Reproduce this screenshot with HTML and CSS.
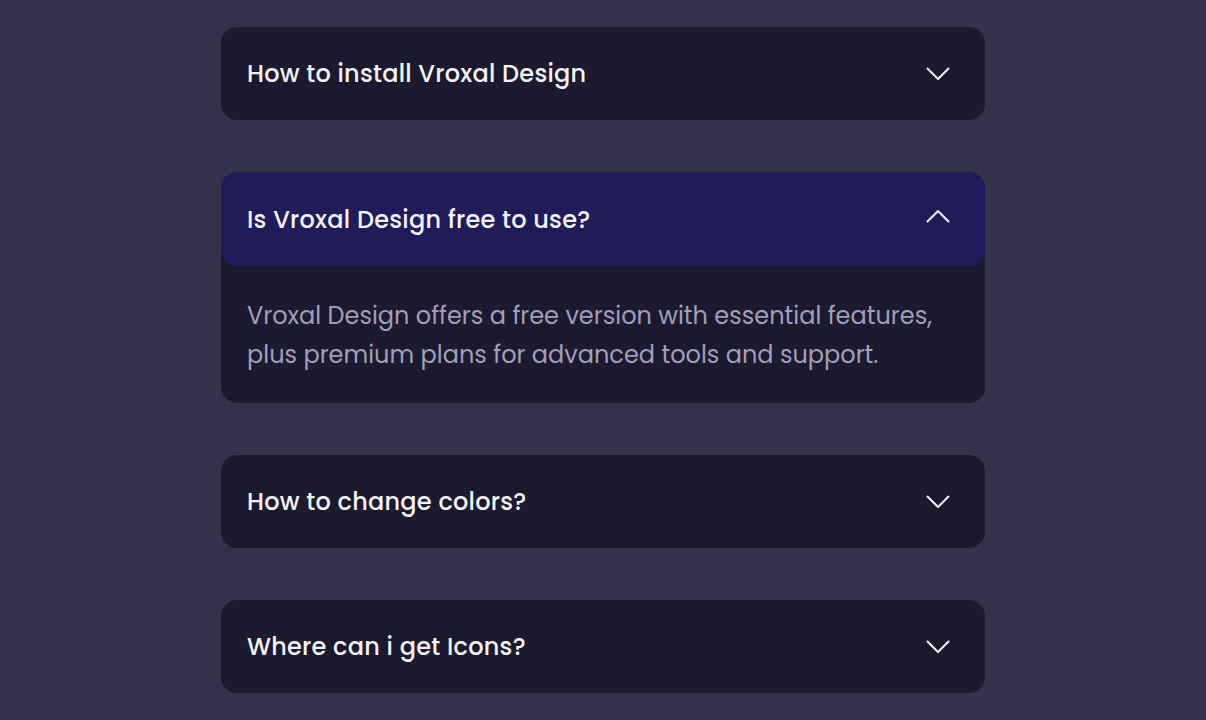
FILE: index.html
```html
<!DOCTYPE html>
<html lang="en">

<head>
    <meta charset="UTF-8">
    <meta name="viewport" content="width=device-width, initial-scale=1.0">
    <title>FAQ</title>
    <link rel="stylesheet" href="styles.css">
</head>

<body>
    <div class="faq">
        <div class="faq-item">
            <div class="faq-header">
                <span>How to install Vroxal Design</span>
                <svg class="chevron" viewBox="0 0 24 14"><path d="M1.5 1.5L12 12 22.5 1.5" /></svg>
            </div>
        </div>

        <div class="faq-item open">
            <div class="faq-header">
                <span>Is Vroxal Design free to use?</span>
                <svg class="chevron" viewBox="0 0 24 14"><path d="M1.5 12.5L12 2 22.5 12.5" /></svg>
            </div>
            <div class="faq-body">
                Vroxal Design offers a free version with essential features,
                plus premium plans for advanced tools and support.
            </div>
        </div>

        <div class="faq-item">
            <div class="faq-header">
                <span>How to change colors?</span>
                <svg class="chevron" viewBox="0 0 24 14"><path d="M1.5 1.5L12 12 22.5 1.5" /></svg>
            </div>
        </div>

        <div class="faq-item">
            <div class="faq-header">
                <span>Where can i get Icons?</span>
                <svg class="chevron" viewBox="0 0 24 14"><path d="M1.5 1.5L12 12 22.5 1.5" /></svg>
            </div>
        </div>
    </div>
</body>

</html>
```

FILE: styles.css
```css
body {
    background-color: #34314a;
    font-family: 'Poppins', 'Inter', 'Open Sans', sans-serif;
    margin: 0;
    padding: 0;
}

.faq {
    width: 764px;
    margin: 0 auto;
    padding-top: 27px;
    display: flex;
    flex-direction: column;
    gap: 52px;
}

.faq-item {
    background-color: #1c1a2e;
    border-radius: 16px;
    overflow: hidden;
}

.faq-header {
    display: flex;
    justify-content: space-between;
    align-items: center;
    padding: 30px 35px 30px 26px;
    height: 33px;
    color: #f4f2fa;
    font-size: 24px;
    font-weight: 500;
    letter-spacing: 0.25px;
}

.open .faq-header {
    background-color: #201c5a;
    border-radius: 16px;
    height: 34px;
}

.chevron {
    width: 24px;
    height: 14px;
    fill: none;
    stroke: #f4f2fa;
    stroke-width: 2;
    stroke-linecap: round;
    stroke-linejoin: round;
}

.open .chevron {
    margin-top: -6px;
}

.faq-body {
    padding: 30px 26px 29px;
    color: #a29fba;
    font-size: 24px;
    line-height: 39px;
}
```
